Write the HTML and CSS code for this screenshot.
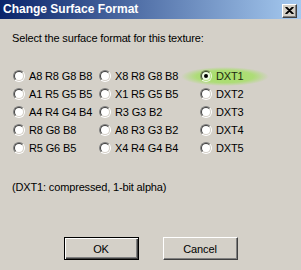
FILE: index.html
```html
<!DOCTYPE html>
<html lang="en">
<head>
  <meta charset="UTF-8"/>
  <title>Change Surface Format</title>
  <link rel="stylesheet" href="styles.css">
</head>
<body>
  <div class="dialog">

    <!-- Title bar -->
    <div class="titlebar">
      <span class="title">Change Surface Format</span>
      <div class="close-btn">
        <svg width="9" height="7" viewBox="0 0 9 7">
          <path d="M0.5 0 L7.5 7 M1.5 0 L8.5 7 M7.5 0 L0.5 7 M8.5 0 L1.5 7" stroke="#000" stroke-width="1.1" fill="none"/>
        </svg>
      </div>
    </div>

    <div class="body">
      <p class="prompt">Select the surface format for this texture:</p>

      <div class="formats">
        <label class="opt"><span class="radio"><span class="radio-in"></span></span>A8 R8 G8 B8</label>
        <label class="opt"><span class="radio"><span class="radio-in"></span></span>X8 R8 G8 B8</label>
        <label class="opt selected"><span class="glow"></span><span class="radio"><span class="radio-in"><span class="dot"></span></span></span>DXT1</label>

        <label class="opt"><span class="radio"><span class="radio-in"></span></span>A1 R5 G5 B5</label>
        <label class="opt"><span class="radio"><span class="radio-in"></span></span>X1 R5 G5 B5</label>
        <label class="opt"><span class="radio"><span class="radio-in"></span></span>DXT2</label>

        <label class="opt"><span class="radio"><span class="radio-in"></span></span>A4 R4 G4 B4</label>
        <label class="opt"><span class="radio"><span class="radio-in"></span></span>R3 G3 B2</label>
        <label class="opt"><span class="radio"><span class="radio-in"></span></span>DXT3</label>

        <label class="opt"><span class="radio"><span class="radio-in"></span></span>R8 G8 B8</label>
        <label class="opt"><span class="radio"><span class="radio-in"></span></span>A8 R3 G3 B2</label>
        <label class="opt"><span class="radio"><span class="radio-in"></span></span>DXT4</label>

        <label class="opt"><span class="radio"><span class="radio-in"></span></span>R5 G6 B5</label>
        <label class="opt"><span class="radio"><span class="radio-in"></span></span>X4 R4 G4 B4</label>
        <label class="opt"><span class="radio"><span class="radio-in"></span></span>DXT5</label>
      </div>

      <p class="desc">(DXT1: compressed, 1-bit alpha)</p>

      <div class="buttons">
        <div class="btn default">OK</div>
        <div class="btn">Cancel</div>
      </div>
    </div>

  </div>
</body>
</html>
```

FILE: styles.css
```css
body {
  margin: 0;
  background: #d4d0c8;
  font-family: "Liberation Sans", Arial, sans-serif;
  font-size: 11px;
  letter-spacing: -0.15px;
  color: #000;
}
.dialog {
  width: 301px;
  height: 270px;
  overflow: hidden;
}
/* Title bar */
.titlebar {
  height: 19px;
  display: flex;
  align-items: center;
  justify-content: space-between;
  padding: 0 4px 0 3px;
  background: linear-gradient(to right, #0a246a, #a6caf0);
}
.title {
  color: #fff;
  font-weight: bold;
  font-size: 12px;
  letter-spacing: 0;
  line-height: 19px;
}
.close-btn {
  width: 15px;
  height: 14px;
  box-sizing: border-box;
  margin-top: 2px;
  display: flex;
  align-items: center;
  justify-content: center;
  background: #d4d0c8;
  border: 1px solid;
  border-color: #fff #404040 #404040 #fff;
  box-shadow: inset -1px -1px #808080;
}
/* Content */
.body {
  padding: 13px 0 0 12px;
}
.prompt {
  margin: 0;
  line-height: 13px;
}
.formats {
  display: grid;
  grid-template-columns: 86px 101px auto;
  grid-auto-rows: 18px;
  margin: 22px 0 0 1px;
}
.opt {
  display: flex;
  align-items: center;
  gap: 4px;
  position: relative;
  white-space: nowrap;
}
.radio {
  width: 12px;
  height: 12px;
  box-sizing: border-box;
  border-radius: 50%;
  border: 1px solid;
  border-color: #808080 #fff #fff #808080;
  flex: none;
}
.radio-in {
  display: flex;
  align-items: center;
  justify-content: center;
  width: 10px;
  height: 10px;
  box-sizing: border-box;
  border-radius: 50%;
  border: 1px solid;
  border-color: #404040 #d4d0c8 #d4d0c8 #404040;
  background: #fff;
}
.selected .radio {
  border-color: #7c8c60 #eef8e0 #eef8e0 #7c8c60;
}
.selected .radio-in {
  border-color: #3c4a2c #b8e08c #b8e08c #3c4a2c;
  background: #eefae2;
}
.selected {
  color: #1c2a10;
}
.dot {
  width: 4px;
  height: 4px;
  border-radius: 50%;
  background: #000;
}
.glow {
  position: absolute;
  left: -19px;
  top: 0;
  width: 88px;
  height: 19px;
  z-index: -1;
  background: radial-gradient(ellipse closest-side, rgba(150, 228, 70, 0.75), rgba(150, 228, 70, 0.62) 65%, rgba(150, 228, 70, 0));
  pointer-events: none;
}
.desc {
  margin: 24px 0 0;
  line-height: 13px;
}
.buttons {
  display: flex;
  justify-content: center;
  gap: 24px;
  margin: 43px 12px 0 0;
}
.btn {
  width: 75px;
  height: 23px;
  box-sizing: border-box;
  display: flex;
  align-items: center;
  justify-content: center;
  border: 1px solid;
  border-color: #fff #404040 #404040 #fff;
  box-shadow: inset -1px -1px #808080, inset 1px 1px #d4d0c8;
}
.btn.default {
  border-color: #000;
  box-shadow: inset 1px 1px #fff, inset -1px -1px #404040, inset -2px -2px #808080;
}
```
